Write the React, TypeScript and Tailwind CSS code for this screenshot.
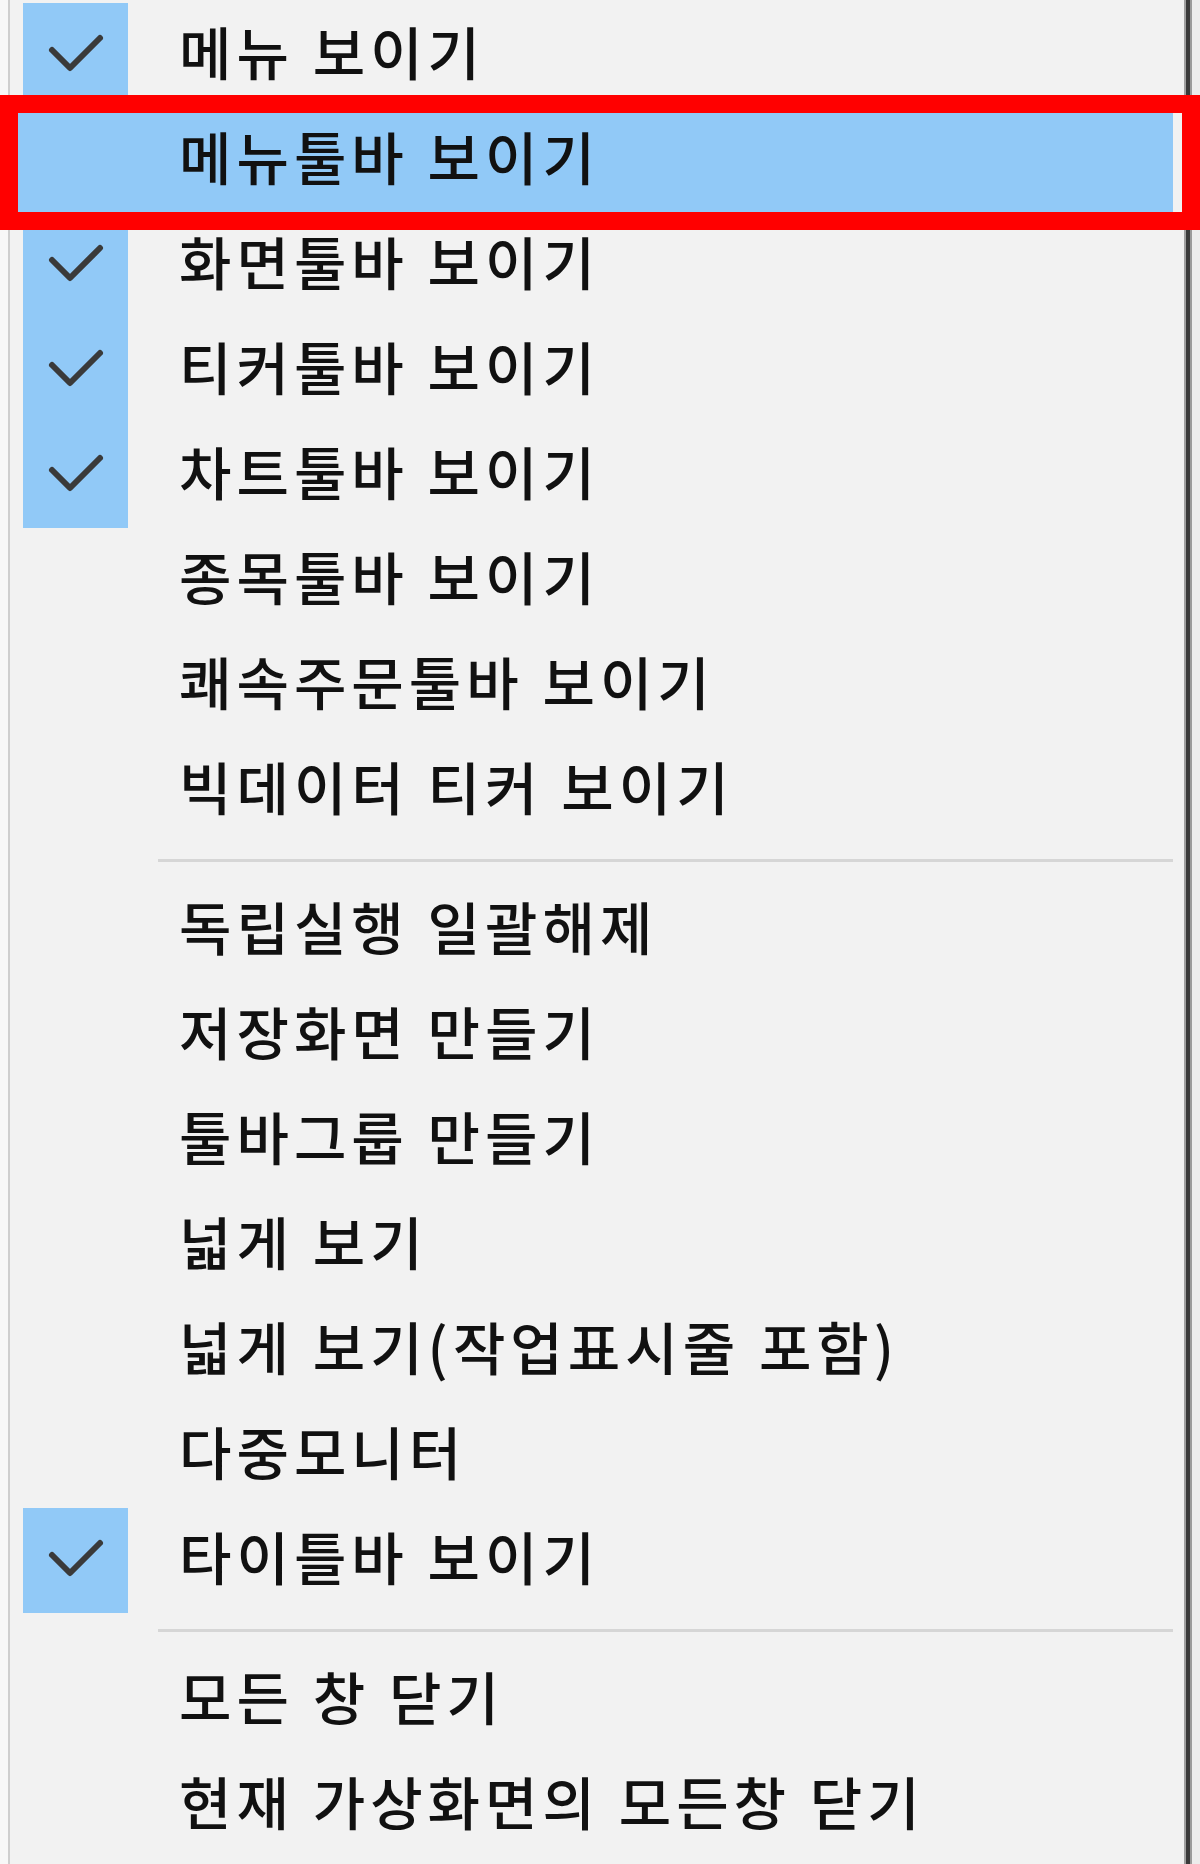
import React from "react";

type Item = { label: string; checked?: boolean; highlighted?: boolean } | { sep: true };

const items: Item[] = [
  { label: "메뉴 보이기", checked: true },
  { label: "메뉴툴바 보이기", highlighted: true },
  { label: "화면툴바 보이기", checked: true },
  { label: "티커툴바 보이기", checked: true },
  { label: "차트툴바 보이기", checked: true },
  { label: "종목툴바 보이기" },
  { label: "쾌속주문툴바 보이기" },
  { label: "빅데이터 티커 보이기" },
  { sep: true },
  { label: "독립실행 일괄해제" },
  { label: "저장화면 만들기" },
  { label: "툴바그룹 만들기" },
  { label: "넓게 보기" },
  { label: "넓게 보기(작업표시줄 포함)" },
  { label: "다중모니터" },
  { label: "타이틀바 보이기", checked: true },
  { sep: true },
  { label: "모든 창 닫기" },
  { label: "현재 가상화면의 모든창 닫기" },
];

function Check() {
  return (
    <svg width="105" height="105" viewBox="0 0 105 105">
      <path
        d="M29 47 L47 65 L77 35"
        fill="none"
        stroke="#3a3a3a"
        strokeWidth="6"
        strokeLinecap="round"
        strokeLinejoin="round"
      />
    </svg>
  );
}

export default function App() {
  return (
    <div
      className="relative flex w-[1200px] h-[1864px] overflow-hidden bg-[#f7f7f7]"
      style={{ fontFamily: '"Noto Sans CJK KR", "Noto Sans", sans-serif' }}
    >
      <div className="w-[8px] bg-[#f8f8f8]" />
      <div className="w-[2px] bg-[#cfcfcf]" />
      <div className="flex-1 bg-[#f2f2f2] pt-[3px] flex flex-col">
        {items.map((it, i) =>
          "sep" in it ? (
            <div key={i} className="h-[35px] flex items-center pl-[148px] pr-[11px]">
              <div className="h-[3px] w-full bg-[#d6d6d6]" />
            </div>
          ) : (
            <div key={i} className="h-[105px] flex items-stretch pl-[3px] pr-[11px]">
              <div
                className={
                  "flex-1 flex items-center " + (it.highlighted ? "bg-[#91c9f7]" : "")
                }
              >
                <div className="ml-[10px] w-[105px] h-[105px] flex items-center justify-center">
                  {it.checked ? (
                    <div className="w-[105px] h-[105px] bg-[#91c9f7]">
                      <Check />
                    </div>
                  ) : null}
                </div>
                <div className="ml-[51px] mb-[10px] text-[57px] leading-none font-medium tracking-[5px] [word-spacing:1px] text-[#111] whitespace-nowrap">
                  {it.label}
                </div>
              </div>
            </div>
          )
        )}
      </div>
      <div className="w-[2px] bg-[#a0a0a0]" />
      <div className="w-[4px] bg-[#3a3a3a]" />
      <div className="w-[2px] bg-[#9a9a9a]" />
      <div className="w-[8px] bg-[#ececec]" />
      <div className="absolute left-0 top-[95px] w-[1200px] h-[135px] border-[18px] border-[#ff0000]" />
    </div>
  );
}
